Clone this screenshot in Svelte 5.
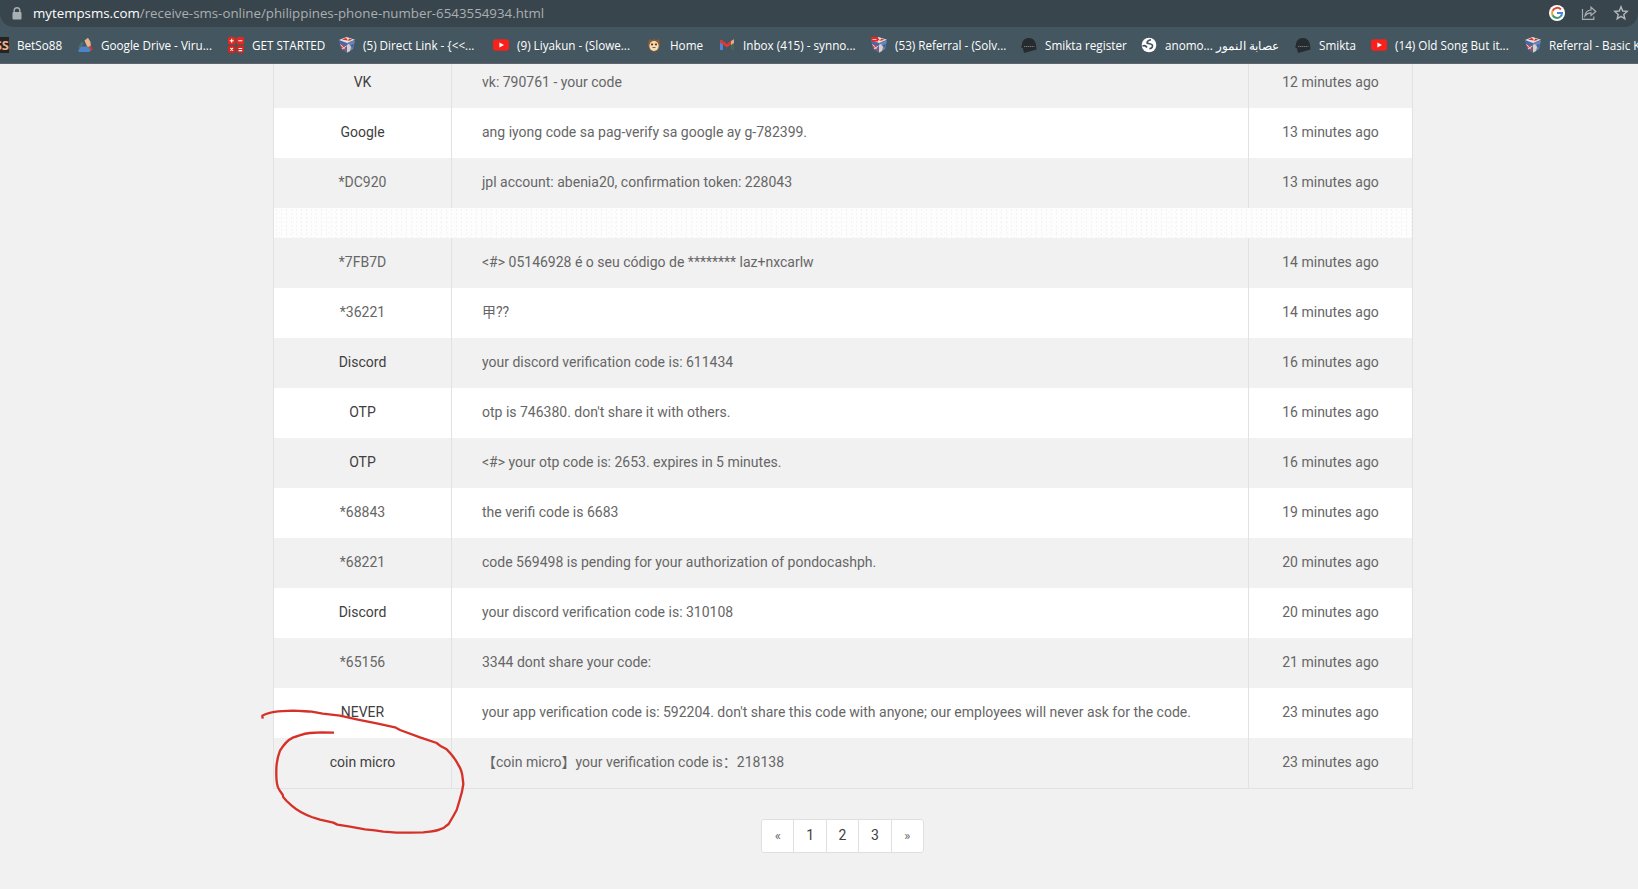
<script>
    const bookmarks = [
        { icon: "drive", title: "Google Drive - Viru...", width: 111 },
        { icon: "calc", title: "GET STARTED", width: 71 },
        { icon: "cube", title: "(5) Direct Link - {<<...", width: 114 },
        { icon: "youtube", title: "(9) Liyakun - (Slowe...", width: 113 },
        { icon: "cat", title: "Home", width: 33 },
        { icon: "gmail", title: "Inbox (415) - synno...", width: 112 },
        { icon: "shield", title: "(53) Referral - (Solv...", width: 110 },
        { icon: "cap", title: "Smikta register", width: 80 },
        { icon: "globe", title: "anomo... عصابة النمور", width: 114 },
        { icon: "cap", title: "Smikta", width: 36 },
        { icon: "youtube", title: "(14) Old Song But it...", width: 114 },
        { icon: "cube", title: "Referral - Basic K", width: 90 }
    ];

    const messages = [
        { sender: "VK", text: "vk: 790761 - your code", time: 12 },
        { sender: "Google", text: "ang iyong code sa pag-verify sa google ay g-782399.", time: 13 },
        { sender: "*DC920", text: "jpl account: abenia20, confirmation token: 228043", time: 13 },
        { ad: true },
        { sender: "*7FB7D", text: "<#> 05146928 é o seu código de ******** laz+nxcarlw", time: 14 },
        { sender: "*36221", text: "甲??", time: 14 },
        { sender: "Discord", text: "your discord verification code is: 611434", time: 16 },
        { sender: "OTP", text: "otp is 746380. don't share it with others.", time: 16 },
        { sender: "OTP", text: "<#> your otp code is: 2653. expires in 5 minutes.", time: 16 },
        { sender: "*68843", text: "the verifi code is 6683", time: 19 },
        { sender: "*68221", text: "code 569498 is pending for your authorization of pondocashph.", time: 20 },
        { sender: "Discord", text: "your discord verification code is: 310108", time: 20 },
        { sender: "*65156", text: "3344 dont share your code:", time: 21 },
        { sender: "NEVER", text: "your app verification code is: 592204. don't share this code with anyone; our employees will never ask for the code.", time: 23 },
        { sender: "coin micro", text: "【coin micro】your verification code is：218138", time: 23 }
    ];

    const pages = ["«", "1", "2", "3", "»"];
</script>

{#snippet favicon(name)}
    <svg class="favicon" viewBox="0 0 16 16">
        {#if name == "drive"}
            <path d="M7.5 3.5 11 0.8 13.5 5 14 10 10.5 10.5z" fill="#e8b48a" />
            <path d="M10.5 10.5 14 8.5 15.5 13 13 14z" fill="#c8403c" />
            <path d="M4.5 4.5 7 6 3.5 12 1 11z" fill="#4c6f72" />
            <path d="M4.5 9.5 11 9.5 13.5 13.5 12.5 15 2 15 1 13.5z" fill="#4d83c8" />
        {:else if name == "calc"}
            <rect width="7.4" height="7.4" rx="1.5" fill="#e5281f" />
            <rect x="8.6" width="7.4" height="7.4" rx="1.5" fill="#e5281f" />
            <rect y="8.6" width="7.4" height="7.4" rx="1.5" fill="#d0261f" />
            <rect x="8.6" y="8.6" width="7.4" height="7.4" rx="1.5" fill="#d0261f" />
            <path d="M1.7 3.8h4M3.7 1.8v4M10.3 3.8h4M2.4 11l2.6 2.6M5 11l-2.6 2.6M10.6 11.5h3.6M10.6 13.6h3.6" stroke="#fff" stroke-width="1.1" />
        {:else if name == "cube" || name == "shield"}
            <path d="M0 3.5 8 6 8 16 2 12z" fill="#4669a8" />
            <path d="M8 6 16 3.5 14 12 8 16z" fill="#6486bd" />
            <path d="M0 3 7.5 0 16 2.8 8 6z" fill="#e4e2e4" />
            <path d="M3 2.8 7 0.8 9 3.5zM10 1.5 13.5 2.8 9 4z" fill="#df3028" />
            {#if name == "shield"}
                <path d="M0 0h7v4.5H1z" fill="#ee251d" />
                <path d="M1.5 2.5h4" stroke="#f6bbb5" />
            {/if}
            <path d="M1 7 6 8.5 7 14 3 12z" fill="#cf4340" />
            <path d="M1.5 7.5 5.5 12 M3 12 7.5 9" stroke="#d9dce6" />
            <path d="M8 8 10 7 12 10 11 14 8 15.5z" fill="#dfcdbf" />
            <path d="M12 8 15 7 13 11z" fill="#395e9f" />
        {:else if name == "youtube"}
            <rect y="2.3" width="16" height="11.4" rx="3" fill="#f9211c" />
            <path d="M6.4 5.4 11 8 6.4 10.6z" fill="#fff" />
        {:else if name == "cat"}
            <path d="M3 2 5.5 3.3 8 2 10.5 3.3 13 2 14 8 12 13.5 8 15 4 13.5 2 8z" fill="#8f5b34" />
            <ellipse cx="8" cy="9" rx="4.6" ry="5" fill="#f1dfb8" />
            <path d="M5 5.5 7 7 9 7 11 5.5" stroke="#eec98c" stroke-width="2" fill="none" />
            <circle cx="6" cy="7.6" r="1" fill="#3b2c25" />
            <circle cx="10" cy="7.6" r="1" fill="#3b2c25" />
            <path d="M6.5 10.5h3" stroke="#90503b" />
        {:else if name == "gmail"}
            <path d="M1 4.5 4 6.5V13H1z" fill="#4d85d8" />
            <path d="M12 6.5 15 4.5V13H12z" fill="#48665b" />
            <path d="M1 3 3 3 8 7 12 3.5V7.5L8 10.5 1 5.5z" fill="#d83a36" />
            <path d="M12 4 15 2.3V6L12 8z" fill="#e6ab85" />
        {:else if name == "cap"}
            <path d="M1 8C1 3.5 4 1 8 1s6.5 3 7 7l.5 4.5L3 16 2 11.5 0 10z" fill="#252b2e" />
            <path d="M3 9.5h10.5" stroke="#737a7e" stroke-dasharray="1.4 .6" />
        {:else if name == "globe"}
            <circle cx="8" cy="8" r="7.3" fill="#fff" />
            <path d="M10 2.8C8 3.2 6 4 6 6c2 1.2 5.5.3 5.5 2.8 0 2-1.7 3-3.2 2.7M1.5 9c1.5-.7 3.5-.2 4.5 1.5" stroke="#40535c" stroke-width="1.6" fill="none" />
        {/if}
    </svg>
{/snippet}

<div class="address">
    <svg class="lock" viewBox="0 0 10 14">
        <path d="M2.2 6V3.6a2.8 2.8 0 0 1 5.6 0V6" fill="none" stroke="#a9b0b4" stroke-width="1.4" />
        <rect x=".5" y="5" width="9" height="7.5" rx="1" fill="#a9b0b4" />
    </svg>
    <div class="url"><span>mytempsms.com</span>/receive-sms-online/philippines-phone-number-6543554934.html</div>
    <div class="actions">
        <svg viewBox="0 0 16 16">
            <circle cx="8" cy="8" r="8" fill="#fff" />
            <path d="M11.9 4.5A5 5 0 0 0 3.6 5.8" stroke="#e04438" stroke-width="2" fill="none" />
            <path d="M3.6 5.8a5 5 0 0 0 0 4.4" stroke="#eba33a" stroke-width="2" fill="none" />
            <path d="M3.6 10.2a5 5 0 0 0 7.6 1.6" stroke="#3e9a61" stroke-width="2" fill="none" />
            <path d="M8 8h5c0 1.8-.7 3-1.8 3.8" stroke="#4483dc" stroke-width="2" fill="none" />
        </svg>
        <svg viewBox="0 0 16 16" fill="none" stroke="#a7aeb2" stroke-width="1.2">
            <path d="M1.5 4v10.3h11.3v-2.8M4 10.8c.4-3.7 2.6-5.6 6-5.8V2.2L14.8 6.5 10 10.5V7.9c-2.7 0-4.5.9-6 2.9z" />
        </svg>
        <svg viewBox="0 0 16 16" fill="none" stroke="#b3b9bd" stroke-width="1.4">
            <path d="M8 1.8 9.7 6l4.5.4-3.4 3 1 4.4L8 11.4l-3.8 2.4 1-4.4-3.4-3L6.3 6z" />
        </svg>
    </div>
</div>

<div class="bookmarks">
    <div class="bookmark first"><span class="betso">SS</span><span class="title">BetSo88</span></div>
    {#each bookmarks as bookmark}
        <div class="bookmark">
            {@render favicon(bookmark.icon)}
            <span class="title" style="width: {bookmark.width}px">{bookmark.title}</span>
        </div>
    {/each}
</div>

<div class="content">
    <div class="table">
        {#each messages as message}
            {#if message.ad}
                <div class="ad"></div>
            {:else}
                <div class="row">
                    <div class="sender" class:masked={message.sender.startsWith("*")}>{message.sender}</div>
                    <div class="text">{message.text}</div>
                    <div class="time">{message.time} minutes ago</div>
                </div>
            {/if}
        {/each}
    </div>

    <div class="pagination">
        {#each pages as page}
            <div class="page" class:arrow={page == "«" || page == "»"}>{page}</div>
        {/each}
    </div>

    <svg class="scribble" viewBox="0 0 900 627">
        <path d="M38 116 37 107C47 100 55 99 65 97C85 92 105 93 130 92C150 92 165 94 185 95L218 101 270 107 320 118 380 130 435 142 450 150 510 172 560 189 573 199 590 208C605 223 618 240 625 255C636 270 637 282 638 295L640 312 636 335 629 360 620 390 610 408 596 432 588 438 C582 445 577 446 570 448C555 454 540 455 520 457L480 458H440L400 455 375 451 345 448 300 440 262 434 250 428 210 419 185 411C160 402 140 390 125 377L110 363 100 352 98 344C88 330 83 325 82 315C78 300 79 285 79 270C79 250 83 230 90 212C100 195 113 180 130 172C145 169 158 160 180 159L215 157 252 158" />
    </svg>
</div>

<style>
    :global(body) {
        margin: 0;
        overflow: hidden;
        background: #f1f1f1;
    }

    .address {
        display: flex;
        align-items: center;
        box-sizing: border-box;
        height: 27px;
        padding: 0 9px 0 12px;
        background: #39454c;
        border-radius: 0 0 14px 14px;
        box-shadow: 0 0 0 20px #44565f;
        clip-path: inset(0);
        color: #a9afb3;
        font: 13.3px "Open Sans", sans-serif;
    }

    .lock {
        width: 10px;
        height: 14px;
    }

    .url {
        flex: 1;
        margin-left: 11px;
        padding-bottom: 1px;
        white-space: nowrap;
    }

    .url span {
        color: #fff;
    }

    .actions {
        display: flex;
        gap: 16px;
        padding-bottom: 1px;
    }

    .actions svg {
        width: 16px;
        height: 16px;
    }

    .bookmarks {
        display: flex;
        align-items: center;
        gap: 16px;
        box-sizing: border-box;
        height: 37px;
        padding-bottom: 1px;
        overflow: hidden;
        background: #44565f;
        border-bottom: 1px solid #60626c;
        color: #fff;
        font: 11.7px "Open Sans", sans-serif;
    }

    .bookmark {
        display: flex;
        flex: none;
        align-items: center;
        gap: 8px;
    }

    .bookmark.first {
        width: 61px;
    }

    .betso {
        display: flex;
        flex: none;
        justify-content: flex-end;
        width: 9px;
        height: 16px;
        overflow: hidden;
        background: #262324;
        color: #efb289;
        font: bold 13px/16px "Open Sans", sans-serif;
    }

    .title {
        white-space: nowrap;
    }

    .favicon {
        width: 16px;
        height: 16px;
    }

    .content {
        position: relative;
        height: 825px;
        overflow: hidden;
        color: #666;
        font: 14px Roboto, "Noto Sans CJK SC", sans-serif;
    }

    .table {
        width: 1138px;
        margin: -6px 0 0 273px;
        border: 1px solid #e2e2e2;
        border-top: 0;
    }

    .row {
        display: grid;
        grid-template-columns: 177px 798px 1fr;
        height: 50px;
        line-height: 48px;
        background: #fff;
    }

    .row:nth-child(odd) {
        background: #f1f1f1;
    }

    .sender,
    .time {
        text-align: center;
    }

    .sender {
        color: #404040;
    }

    .sender.masked {
        color: #666;
    }

    .text {
        padding-left: 30px;
        border: solid #e2e2e2;
        border-width: 0 1px;
        white-space: nowrap;
    }

    .ad {
        height: 30px;
        background:
            radial-gradient(#f3f3f3 0.6px, transparent 0.9px) 0 0 / 5px 4px,
            radial-gradient(#f3f3f3 0.6px, transparent 0.9px) 2px 2px / 7px 5px #fdfdfd;
    }

    .pagination {
        display: flex;
        width: 161px;
        margin: 30px 0 0 761px;
        background: #fff;
        border: 1px solid #e0e0e0;
        border-radius: 3px;
    }

    .page {
        flex: 1;
        height: 32px;
        color: #404040;
        line-height: 31px;
        text-align: center;
    }

    .page + .page {
        border-left: 1px solid #e0e0e0;
    }

    .page.arrow {
        color: #666;
        font-size: 13px;
    }

    .scribble {
        position: absolute;
        top: 616px;
        left: 250px;
        width: 300px;
        height: 209px;
        fill: none;
        stroke: #d53128;
        stroke-width: 7;
        stroke-linejoin: round;
    }
</style>
